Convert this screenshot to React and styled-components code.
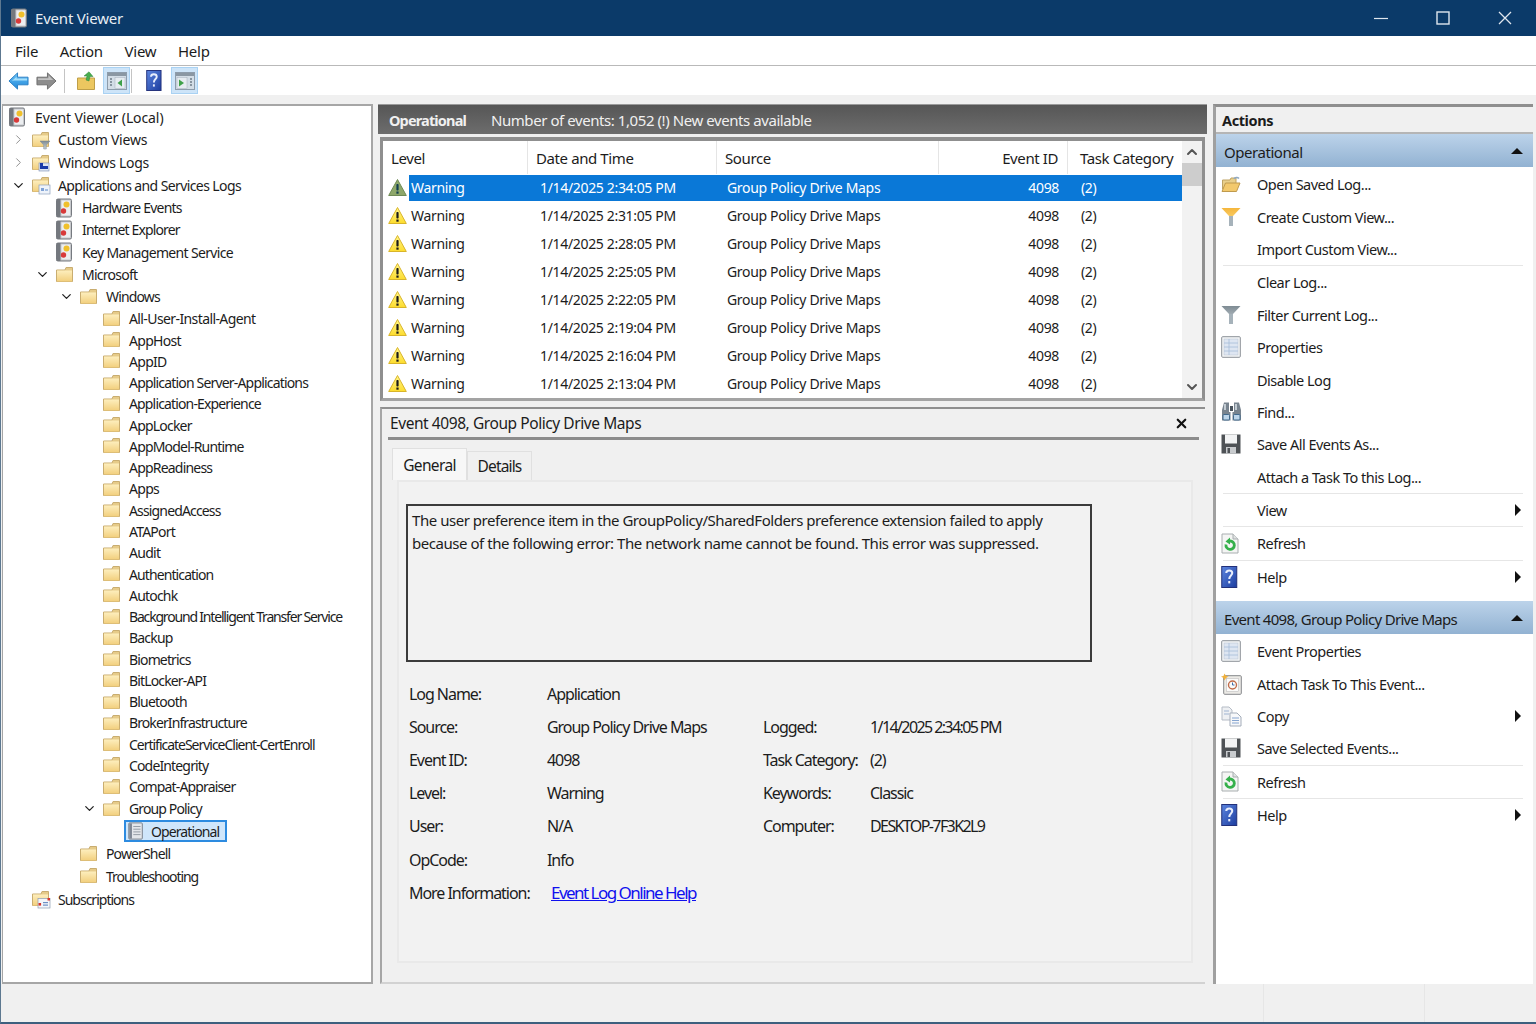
import React from 'react';
import styled, { createGlobalStyle } from 'styled-components';
import { ChevronRight, ChevronDown, ChevronUp, X } from 'lucide-react';

const GlobalStyle = createGlobalStyle`
  html, body { margin: 0; padding: 0; background: #f0f0f0; }
  body { font-family: "Noto Sans", "Open Sans", sans-serif; color: #1c1c1c; }
  * { box-sizing: border-box; }
`;

const Window = styled.div`
  width: 1536px;
  height: 1024px;
  display: flex;
  flex-direction: column;
  overflow: hidden;
  background: #f0f0f0;
  border-left: 1px solid #5d7890;
  border-bottom: 2px solid #3d5f7e;
  font-size: 15px;
`;

const TitleBar = styled.div`
  height: 36px;
  flex: none;
  background: #0b3a69;
  color: #e8eef4;
  display: flex;
  align-items: center;
  padding-left: 9px;
  font-size: 15px;
  letter-spacing: -0.2px;
`;

const TitleText = styled.span`
  flex: 1;
  margin-left: 7px;
`;

const WinButton = styled.div`
  width: 62px;
  height: 36px;
  display: flex;
  align-items: center;
  justify-content: center;
`;

const MenuBar = styled.div`
  height: 30px;
  flex: none;
  background: #fff;
  border-bottom: 1px solid #b9b9b9;
  display: flex;
  align-items: center;
  padding-left: 14px;
  gap: 21.5px;
  font-size: 15px;
  letter-spacing: -0.2px;
`;

const ToolBar = styled.div`
  height: 29px;
  flex: none;
  background: #fff;
  display: flex;
  align-items: center;
  padding-left: 3px;
`;

const ToolButton = styled.div`
  width: ${(p) => p.$w || 28}px;
  height: 27px;
  display: flex;
  align-items: center;
  justify-content: center;
  padding-left: ${(p) => p.$pl || 0}px;
  background: ${(p) => (p.$active ? '#cde4f8' : 'transparent')};
  border: 1px solid ${(p) => (p.$active ? '#a9d2f3' : 'transparent')};
`;

const ToolSep = styled.div`
  width: 1px;
  height: 24px;
  background: #c4c4c4;
  margin: 0 ${(p) => p.$m || 2}px;
`;

const Main = styled.div`
  height: 889px;
  flex: none;
  display: flex;
  gap: 5px;
  padding: 9px 0 0 1px;
`;

const TreePanel = styled.div`
  width: 371px;
  height: 880px;
  flex: none;
  background: #fff;
  border: 2px solid #a6a6a6;
  border-left-width: 1px;
  display: flex;
  flex-direction: column;
`;

const TreeRow = styled.div`
  height: ${(p) => p.$h}px;
  flex: none;
  display: flex;
  align-items: center;
  padding-left: ${(p) => p.$indent}px;
  white-space: nowrap;
  letter-spacing: ${(p) => p.$ls}px;
  font-size: 14px;
`;

const Twist = styled.span`
  width: 15px;
  margin-left: -20px;
  margin-right: 5px;
  display: flex;
  justify-content: center;
  color: ${(p) => (p.$open ? '#222' : '#8a8a8a')};
`;

const TreeIcon = styled.span`
  width: 27px;
  flex: none;
  display: flex;
`;

const TreeSelected = styled.span`
  display: flex;
  align-items: center;
  height: 22px;
  margin-left: -2px;
  padding: 0 6px 0 1px;
  gap: 6px;
  background: #cfe6fb;
  border: 2px solid #2d8be0;
`;

const Center = styled.div`
  width: 830px;
  flex: none;
  display: flex;
  flex-direction: column;
`;

const OperationalBar = styled.div`
  width: 829px;
  height: 30px;
  flex: none;
  background: linear-gradient(180deg, #565656, #6d6d6d);
  border-top: 1px solid #9a9a9a;
  color: #f0f0f0;
  display: flex;
  align-items: center;
  padding-left: 11px;
  gap: 25px;
  font-size: 15px;
  letter-spacing: -0.43px;
`;

const OperationalName = styled.b`
  font-weight: 700;
  font-size: 14.5px;
  letter-spacing: -0.85px;
`;

const TableBox = styled.div`
  width: 825px;
  height: 264px;
  margin: 3px 0 0 2px;
  flex: none;
  background: #fff;
  border: 3px solid #8f8f8f;
  border-top-width: 4px;
  border-bottom: 3px solid #a3a3a3;
  display: flex;
  overflow: hidden;
`;

const TableBody = styled.div`
  flex: 1;
  min-width: 0;
`;

const ColumnGrid = styled.div`
  display: grid;
  grid-template-columns: 145px 189px 222px 129px 1fr;
  height: ${(p) => p.$h}px;
`;

const HeadCell = styled.div`
  border-right: 1px solid #e5e5e5;
  display: flex;
  align-items: center;
  justify-content: ${(p) => (p.$right ? 'flex-end' : 'flex-start')};
  padding: ${(p) => (p.$right ? '0 9px 0 0' : '0 0 0 8px')};
  white-space: nowrap;
  font-size: 15px;
  letter-spacing: -0.4px;
  &:last-child { border-right: 0; padding-left: 12px; }
`;

const EventRow = styled(ColumnGrid)`
  color: ${(p) => (p.$selected ? '#fff' : '#1c1c1c')};
  font-size: 14px;
  letter-spacing: -0.33px;
  align-items: center;
`;

const LevelCell = styled.div`
  display: flex;
  align-items: center;
  padding-left: 5px;
  gap: 2px;
`;

const RowCell = styled.div`
  display: flex;
  align-items: center;
  white-space: nowrap;
  height: 26px;
  background: ${(p) => (p.$selected ? '#0a78d7' : 'transparent')};
  justify-content: ${(p) => (p.$right ? 'flex-end' : 'flex-start')};
  padding: ${(p) => p.$pad};
`;

const Selection = styled.span`
  flex: 1;
  height: 26px;
  display: flex;
  align-items: center;
  padding-left: 2px;
  background: ${(p) => (p.$selected ? '#0a78d7' : 'transparent')};
`;

const ScrollBar = styled.div`
  width: 20px;
  flex: none;
  display: flex;
  flex-direction: column;
  align-items: center;
  background: #f2f2f2;
  color: #555;
`;

const ScrollEnd = styled.div`
  height: 22px;
  flex: none;
  display: flex;
  align-items: center;
  justify-content: center;
`;

const ScrollThumb = styled.div`
  width: 100%;
  height: 23px;
  flex: none;
  background: #cdcdcd;
`;

const ScrollTrack = styled.div`
  flex: 1;
`;

const DetailPanel = styled.div`
  flex: 1;
  min-height: 0;
  margin: 6px 0 0 2px;
  width: 825px;
  border-top: 2px solid #8f8f8f;
  border-left: 2px solid #a6a6a6;
  border-bottom: 2px solid #d2d2d2;
  display: flex;
  flex-direction: column;
  background: #f0f0f0;
`;

const DetailHead = styled.div`
  height: 31px;
  margin: 0 6px 0 6px;
  border-bottom: 3px solid #8c8c8c;
  display: flex;
  align-items: center;
  justify-content: space-between;
  padding: 0 10px 0 2px;
  font-size: 15.5px;
  letter-spacing: -0.43px;
  flex: none;
`;

const Tabs = styled.div`
  display: flex;
  align-items: flex-end;
  height: 32px;
  margin: 8px 0 0 10px;
  flex: none;
`;

const Tab = styled.div`
  height: ${(p) => (p.$active ? 32 : 29)}px;
  width: ${(p) => p.$w}px;
  display: flex;
  align-items: center;
  justify-content: center;
  background: ${(p) => (p.$active ? '#f7f7f7' : '#f0f0f0')};
  border: 1px solid #e0e0e0;
  border-bottom: 0;
  font-size: 15.5px;
  letter-spacing: ${(p) => p.$ls}px;
`;

const TabBody = styled.div`
  width: 796px;
  height: 483px;
  margin-left: 15px;
  background: #f2f2f2;
  border: 2px solid #e9e9e9;
  padding: 22px 0 0 7px;
  flex: none;
`;

const MessageBox = styled.div`
  width: 686px;
  height: 158px;
  border: 2px solid #3b3b3b;
  padding: 3px 4px;
  line-height: 23px;
  font-size: 15px;
  letter-spacing: -0.46px;
`;

const Fields = styled.div`
  margin: 15px 0 0 3px;
  display: grid;
  grid-template-columns: 138px 216px 107px 1fr;
  grid-auto-rows: 33.2px;
  align-items: center;
  font-size: 16px;
  letter-spacing: -1.05px;
  white-space: nowrap;
`;

const TightValue = styled.span`
  letter-spacing: -1.6px;
`;

const InfoLink = styled.a`
  color: #1010ee;
  text-decoration: underline;
  margin-left: 4px;
  font-size: 17px;
  letter-spacing: -1.52px;
`;

const ActionsPanel = styled.div`
  width: 320px;
  height: 880px;
  flex: none;
  border-top: 3px solid #8f8f8f;
  border-left: 3px solid #a0a0a0;
  background: #fff;
  display: flex;
  flex-direction: column;
`;

const ActionsTitle = styled.div`
  height: 27px;
  flex: none;
  display: flex;
  align-items: center;
  padding: 1px 0 0 6px;
  background: #f0f0f0;
  border-bottom: 2px solid #b5b5b5;
  font-weight: 700;
  font-size: 14.5px;
  letter-spacing: -0.4px;
`;

const SectionHead = styled.div`
  height: 33px;
  flex: none;
  margin-top: ${(p) => p.$mt || 0}px;
  background: linear-gradient(180deg, #bcd3ea, #92b2d2);
  display: flex;
  align-items: center;
  justify-content: space-between;
  padding: 3px 10px 0 8px;
  font-size: 15px;
  letter-spacing: ${(p) => p.$ls}px;
`;

const ActionList = styled.div`
  display: flex;
  flex-direction: column;
  flex: none;
  padding-top: 1px;
`;

const ActionRow = styled.div`
  height: 32.4px;
  flex: none;
  display: flex;
  align-items: center;
  padding: 0 10px 0 5px;
  font-size: 14.5px;
  letter-spacing: -0.5px;
`;

const ActionIcon = styled.span`
  width: 36px;
  flex: none;
  display: flex;
`;

const ActionLabel = styled.span`
  flex: 1;
`;

const ActionSep = styled.div`
  height: 1px;
  margin: 0 10px 0 7px;
  background: #e6e6e6;
  flex: none;
`;

const StatusBar = styled.div`
  flex: 1;
  display: grid;
  grid-template-columns: 1262px 161px 1fr;
`;

const StatusCell = styled.div`
  border-left: 1px solid #e6e6e6;
  &:first-child { border-left: 0; }
`;

// little hand drawn icons, the packages don't have the mmc ones
const Defs = styled.svg`
  display: block;
  width: 0;
  height: 0;
  flex: none;
`;

const SharedDefs = () => (
  <Defs>
    <defs>
      <linearGradient id="fold" x1="0" y1="0" x2="0" y2="1">
        <stop offset="0" stopColor="#fdeebd" />
        <stop offset="1" stopColor="#f2cf7d" />
      </linearGradient>
      <linearGradient id="helpg" x1="0" y1="0" x2="1" y2="1">
        <stop offset="0" stopColor="#5d86e0" />
        <stop offset="1" stopColor="#1b3c9e" />
      </linearGradient>
      <linearGradient id="funnel" x1="0" y1="0" x2="0" y2="1">
        <stop offset="0" stopColor="#f5b63c" />
        <stop offset="1" stopColor="#fbe08c" />
      </linearGradient>
      <linearGradient id="grayf" x1="0" y1="0" x2="0" y2="1">
        <stop offset="0" stopColor="#7e8b93" />
        <stop offset="1" stopColor="#cbd3d8" />
      </linearGradient>
      <linearGradient id="warn" x1="0" y1="0" x2="0" y2="1">
        <stop offset="0" stopColor="#fff68a" />
        <stop offset="1" stopColor="#fddc2e" />
      </linearGradient>
      <linearGradient id="back" x1="0" y1="0" x2="0" y2="1">
        <stop offset="0" stopColor="#6cc4f7" />
        <stop offset="1" stopColor="#1f86d8" />
      </linearGradient>
    </defs>
  </Defs>
);

const LogIcon = () => (
  <svg width="18" height="20" viewBox="0 0 18 20">
    <rect x="1.5" y="1" width="15" height="18" rx="1.5" fill="#c7c9cc" stroke="#767a80" />
    <rect x="1.5" y="1" width="4" height="18" fill="#74787e" />
    <rect x="6.5" y="2.5" width="8.5" height="15" fill="#eceef0" />
    <circle cx="11.5" cy="6.5" r="3" fill="#f0c02c" />
    <circle cx="8.5" cy="13" r="2.7" fill="#d83a3a" />
  </svg>
);

const Folder = ({ children }) => (
  <svg width="20" height="20" viewBox="0 0 20 20">
    <path d="M1.5 5 H10 L11 2.5 H17.5 V16.5 H1.5Z" fill="#e6cb89" stroke="#c9ad70" />
    <rect x="2" y="5.5" width="15" height="11" fill="url(#fold)" />
    {children}
  </svg>
);

const FilterFolder = () => (
  <Folder>
    <path d="M9 11 H19 L15.3 15 V19 H12.7 V15Z" fill="url(#grayf)" stroke="#7e8b93" strokeWidth=".5" />
  </Folder>
);

const WindowsFolder = () => (
  <Folder>
    <rect x="8" y="10" width="10" height="8" fill="#dfe6f2" stroke="#7a8db5" strokeWidth=".6" />
    <path d="M9 10 V16 H17 V13 H12 V10Z" fill="#1b3ba8" />
  </Folder>
);

const AppsFolder = () => (
  <Folder>
    <rect x="8" y="10" width="11" height="9" fill="#eef3fa" stroke="#8ca0bd" strokeWidth=".7" />
    <rect x="10" y="13" width="3" height="3" fill="#7fa2d6" />
    <rect x="14" y="14" width="3" height="2" fill="#a5bfe2" />
  </Folder>
);

const SubsFolder = () => (
  <Folder>
    <rect x="7" y="9.5" width="12" height="9.5" fill="#f4f6fa" stroke="#8e9db2" strokeWidth=".7" />
    <rect x="7.5" y="14" width="2.6" height="2.6" fill="#d8352c" />
    <rect x="16.5" y="9" width="2.5" height="2.5" fill="#d8352c" />
    <rect x="12" y="13" width="5" height="1.2" fill="#6d8fc4" />
    <rect x="12" y="15.5" width="5" height="1.2" fill="#6d8fc4" />
  </Folder>
);

const SheetIcon = () => (
  <svg width="18" height="18" viewBox="0 0 18 20">
    <rect x="1" y="1" width="15" height="18" rx="1" fill="#e3e6ea" stroke="#6f7782" />
    <rect x="1.5" y="1.5" width="3" height="17" fill="#7e8794" />
    <path d="M6 5 H14 M6 8 H14 M6 11 H14 M6 14 H14" stroke="#8d95a0" strokeWidth="1" />
  </svg>
);

const Warning = ({ dim }) => (
  <svg width="19" height="19" viewBox="0 0 19 19">
    <path d="M9.5 1.5 L18.3 17.5 H.7Z" fill={dim ? '#8ea76a' : 'url(#warn)'} stroke={dim ? '#6f8a55' : '#d9b52a'} strokeLinejoin="round" />
    <rect x="8.4" y="6" width="2.2" height="6.5" rx=".8" fill={dim ? '#123d4f' : '#1a1a1a'} />
    <rect x="8.4" y="13.5" width="2.2" height="2.2" fill={dim ? '#123d4f' : '#1a1a1a'} />
  </svg>
);

const ArrowBack = () => (
  <svg width="21" height="20" viewBox="0 0 22 20">
    <path d="M1 10 L10 1.5 V6 H21 V14 H10 V18.5Z" fill="url(#back)" stroke="#2a7fc4" strokeLinejoin="round" />
    <path d="M4 10 L9 5.5 V7.5 H20 V9.5 H6Z" fill="#a6e0fb" />
  </svg>
);

const ArrowForward = () => (
  <svg width="21" height="20" viewBox="0 0 22 20">
    <path d="M21 10 L12 1.5 V6 H1 V14 H12 V18.5Z" fill="#8d8d8d" stroke="#6d6d6d" strokeLinejoin="round" />
    <path d="M2 7 H13 V4 L18 9 H2Z" fill="#c2c2c2" />
  </svg>
);

const UpFolder = () => (
  <svg width="20" height="20" viewBox="0 0 20 20">
    <path d="M1.5 7 H18.5 V18.5 H1.5Z" fill="#ecc760" stroke="#bf9f49" />
    <path d="M10 9 L11 5 H8 L13 .8 L17 5.5 H14 L13 10Z" fill="#49ad4e" stroke="#33873a" strokeWidth=".5" />
  </svg>
);

const PaneIcon = ({ right }) => (
  <svg width="20" height="20" viewBox="0 0 20 20">
    <rect x=".5" y="1.5" width="19" height="17" fill="#d3dde6" stroke="#8d9cab" />
    <rect x="1" y="2" width="18" height="3" fill="#8a97a3" />
    {right ? (
      <>
        <rect x="2" y="6.5" width="10" height="11" fill="#e6ecf1" stroke="#a5b0bb" strokeWidth=".5" />
        <path d="M4 8.5 L9 12 L4 15.5Z" fill="#3ea148" />
        <path d="M15 8 H17 M15 11 H17 M15 14 H17" stroke="#6f7c88" strokeWidth="1.5" />
      </>
    ) : (
      <>
        <path d="M3 8 H5 M3 11 H5 M3 14 H5" stroke="#6f7c88" strokeWidth="1.5" />
        <rect x="8" y="6.5" width="10" height="11" fill="#e6ecf1" stroke="#a5b0bb" strokeWidth=".5" />
        <path d="M15 8.5 L10.5 12 L15 15.5Z" fill="#3ea148" />
      </>
    )}
  </svg>
);

const HelpIcon = ({ size = 22 }) => (
  <svg width={size * 0.75} height={size} viewBox="0 0 16 22">
    <rect x=".5" y=".5" width="15" height="21" fill="url(#helpg)" stroke="#22307a" />
    <path d="M5 7 C5 3.5 11 3.5 11 7 C11 9.5 8 9.5 8 13" fill="none" stroke="#e8eefc" strokeWidth="2" />
    <rect x="7" y="15" width="2" height="2.4" fill="#e8eefc" />
  </svg>
);

const OpenIcon = () => (
  <svg width="20" height="20" viewBox="0 0 20 20">
    <path d="M1.5 6 H9 L10 4 H15 V15 H1.5Z" fill="#e9cf8a" stroke="#bfa362" />
    <path d="M1 17.5 L4.5 9 H19 L15.5 17.5Z" fill="#f3c96c" stroke="#bf9a4e" />
    <path d="M13 5 A3 3 0 0 1 18 4.5" fill="none" stroke="#8fa9c4" strokeWidth="1.5" />
  </svg>
);

const FunnelIcon = ({ gray }) => (
  <svg width="20" height="20" viewBox="0 0 20 20">
    <path d="M.5 1 H19.5 L12 9 V19 H8 V9Z" fill={gray ? 'url(#grayf)' : 'url(#funnel)'} />
    <rect x="8" y="9" width="4" height="10" fill="#a6b2ba" />
  </svg>
);

const BinocularIcon = () => (
  <svg width="21" height="21" viewBox="0 0 21 21">
    <path d="M3 1.5 H8 V11 H9.5 V19.5 H1 V9Z" fill="#78848f" />
    <path d="M18 1.5 H13 V11 H11.5 V19.5 H20 V9Z" fill="#78848f" />
    <rect x="9" y="5" width="3" height="5" fill="#4a545e" />
    <rect x="2" y="13.5" width="6.5" height="5.5" rx="1" fill="#bcd5ea" stroke="#426a8d" />
    <rect x="12.5" y="13.5" width="6.5" height="5.5" rx="1" fill="#bcd5ea" stroke="#426a8d" />
    <rect x="3" y="3" width="2" height="6" fill="#c3ccd3" />
    <rect x="14" y="3" width="2" height="6" fill="#c3ccd3" />
  </svg>
);

const SaveIcon = () => (
  <svg width="20" height="20" viewBox="0 0 20 20">
    <path d="M.5 .5 H19.5 V19.5 H.5Z" fill="#4e5256" />
    <rect x="4" y=".5" width="12" height="9" fill="#f2f3f4" />
    <rect x="5" y="13" width="10" height="6.5" fill="#c8cbce" />
    <rect x="6.5" y="14" width="2.5" height="5" fill="#4e5256" />
  </svg>
);

const RefreshIcon = () => (
  <svg width="18" height="21" viewBox="0 0 18 21">
    <path d="M1 1 H12 L17 6 V20 H1Z" fill="#f4f5f4" stroke="#a9aeb0" />
    <path d="M12 1 V6 H17" fill="#dfe2e2" stroke="#a9aeb0" />
    <path d="M5 11.5 A4.2 4.2 0 1 0 9 8" fill="none" stroke="#35b04b" strokeWidth="2.8" />
    <path d="M9 4.5 L4.5 8.5 L9 11.5Z" fill="#35b04b" />
  </svg>
);

const PropsIcon = () => (
  <svg width="20" height="22" viewBox="0 0 20 22">
    <rect x=".7" y=".7" width="18.6" height="20.6" rx="1" fill="#f3f5f7" stroke="#8b9097" />
    <rect x="3" y="3" width="14" height="16" fill="#dee6f2" stroke="#b9c2cd" strokeWidth=".5" />
    <path d="M3 7 H17 M3 11 H17 M3 15 H17 M8 3 V19" stroke="#a6bcd8" strokeWidth=".8" />
  </svg>
);

const TaskIcon = () => (
  <svg width="21" height="22" viewBox="0 0 21 22">
    <rect x="2.7" y="2.7" width="17.6" height="18.6" rx="1" fill="#eceae6" stroke="#86888b" />
    <rect x="5.5" y="5.5" width="12" height="13" fill="#fbfbfa" stroke="#b4b4b4" strokeWidth=".5" />
    <circle cx="11.5" cy="12" r="4" fill="none" stroke="#c06c4a" strokeWidth="1.4" />
    <path d="M11.5 9.5 V12 H13.5" stroke="#3e6ca8" fill="none" />
    <path d="M3.5 .5 L5 3 L7.5 3.5 L5 5 L3.5 7.5 L2.5 5 L0 3.5 L2.5 3Z" fill="#f2b13a" />
  </svg>
);

const CopyIcon = () => (
  <svg width="21" height="21" viewBox="0 0 21 21">
    <path d="M1 1 H8 L11 4 V14 H1Z" fill="#eef0f3" stroke="#b5bcc6" />
    <path d="M3 5 H8 M3 8 H8" stroke="#9fb4d2" />
    <path d="M9 7 H16 L20 11 V20 H9Z" fill="#f7f8fa" stroke="#a4adba" />
    <path d="M11 12 H18 M11 14.5 H18 M11 17 H18" stroke="#86a5d0" />
  </svg>
);

const CaretUp = styled.span`
  width: 0;
  height: 0;
  margin-top: -3px;
  border-left: 6px solid transparent;
  border-right: 6px solid transparent;
  border-bottom: 6px solid #111;
`;

const CaretRight = styled.span`
  width: 0;
  height: 0;
  margin-right: 2px;
  border-top: 6px solid transparent;
  border-bottom: 6px solid transparent;
  border-left: 6px solid #111;
`;

const folderRows = [
  ['All-User-Install-Agent', -0.6], ['AppHost', -0.7], ['AppID', -0.7], ['Application Server-Applications', -0.82],
  ['Application-Experience', -0.85], ['AppLocker', -0.8], ['AppModel-Runtime', -0.81], ['AppReadiness', -0.8],
  ['Apps', -0.7], ['AssignedAccess', -0.85], ['ATAPort', -0.8], ['Audit', -0.7], ['Authentication', -0.9],
  ['Autochk', -0.8], ['Background Intelligent Transfer Service', -1.18], ['Backup', -0.8], ['Biometrics', -0.85],
  ['BitLocker-API', -0.85], ['Bluetooth', -0.8], ['BrokerInfrastructure', -0.9],
  ['CertificateServiceClient-CertEnroll', -1.02], ['CodeIntegrity', -0.85], ['Compat-Appraiser', -0.85],
];

const treeRows = [
  { label: 'Event Viewer (Local)', indent: 5, icon: LogIcon, h: 22, ls: -0.1 },
  { label: 'Custom Views', indent: 28, icon: FilterFolder, twist: 'closed', h: 23, ls: -0.22 },
  { label: 'Windows Logs', indent: 28, icon: WindowsFolder, twist: 'closed', h: 23, ls: -0.3 },
  { label: 'Applications and Services Logs', indent: 28, icon: AppsFolder, twist: 'open', h: 22.5, ls: -0.6 },
  { label: 'Hardware Events', indent: 52, icon: LogIcon, h: 22.3, ls: -0.78 },
  { label: 'Internet Explorer', indent: 52, icon: LogIcon, h: 22.3, ls: -0.87 },
  { label: 'Key Management Service', indent: 52, icon: LogIcon, h: 22.3, ls: -0.67 },
  { label: 'Microsoft', indent: 52, icon: Folder, twist: 'open', h: 22.3, ls: -0.75 },
  { label: 'Windows', indent: 76, icon: Folder, twist: 'open', h: 22.5, ls: -0.85 },
  ...folderRows.map(([label, ls]) => ({ label, indent: 99, icon: Folder, h: 21.27, ls })),
  { label: 'Group Policy', indent: 99, icon: Folder, twist: 'open', h: 22.6, ls: -0.87 },
  { label: 'Operational', indent: 123, icon: SheetIcon, selected: true, h: 22.5, ls: -0.9 },
  { label: 'PowerShell', indent: 76, icon: Folder, h: 22.5, ls: -0.86 },
  { label: 'Troubleshooting', indent: 76, icon: Folder, h: 22.8, ls: -1.06 },
  { label: 'Subscriptions', indent: 28, icon: SubsFolder, h: 23, ls: -1 },
];

const events = [
  '1/14/2025 2:34:05 PM', '1/14/2025 2:31:05 PM', '1/14/2025 2:28:05 PM', '1/14/2025 2:25:05 PM',
  '1/14/2025 2:22:05 PM', '1/14/2025 2:19:04 PM', '1/14/2025 2:16:04 PM', '1/14/2025 2:13:04 PM',
];

const Blank = () => null;

const logActions = [
  { label: 'Open Saved Log...', icon: OpenIcon },
  { label: 'Create Custom View...', icon: FunnelIcon },
  { label: 'Import Custom View...', sep: true },
  { label: 'Clear Log...' },
  { label: 'Filter Current Log...', icon: () => <FunnelIcon gray /> },
  { label: 'Properties', icon: PropsIcon },
  { label: 'Disable Log' },
  { label: 'Find...', icon: BinocularIcon },
  { label: 'Save All Events As...', icon: SaveIcon },
  { label: 'Attach a Task To this Log...', sep: true },
  { label: 'View', sub: true, sep: true },
  { label: 'Refresh', icon: RefreshIcon, sep: true },
  { label: 'Help', icon: HelpIcon, sub: true },
];

const eventActions = [
  { label: 'Event Properties', icon: PropsIcon },
  { label: 'Attach Task To This Event...', icon: TaskIcon },
  { label: 'Copy', icon: CopyIcon, sub: true },
  { label: 'Save Selected Events...', icon: SaveIcon, sep: true },
  { label: 'Refresh', icon: RefreshIcon, sep: true },
  { label: 'Help', icon: HelpIcon, sub: true },
];

const ActionGroup = ({ items }) => (
  <ActionList>
    {items.map((item) => {
      const Icon = item.icon || Blank;
      return (
        <React.Fragment key={item.label}>
          <ActionRow>
            <ActionIcon><Icon /></ActionIcon>
            <ActionLabel>{item.label}</ActionLabel>
            {item.sub && <CaretRight />}
          </ActionRow>
          {item.sep && <ActionSep />}
        </React.Fragment>
      );
    })}
  </ActionList>
);

const App = () => (
  <Window>
    <GlobalStyle />
    <SharedDefs />
    <TitleBar>
      <LogIcon />
      <TitleText>Event Viewer</TitleText>
      <WinButton>
        <svg width="14" height="14" viewBox="0 0 14 14"><path d="M0 7.5 H14" stroke="#dfe6ee" strokeWidth="1.2" /></svg>
      </WinButton>
      <WinButton>
        <svg width="14" height="14" viewBox="0 0 14 14"><rect x="1" y="1" width="12" height="12" fill="none" stroke="#dfe6ee" strokeWidth="1.4" /></svg>
      </WinButton>
      <WinButton>
        <svg width="14" height="14" viewBox="0 0 14 14"><path d="M1 1 L13 13 M13 1 L1 13" stroke="#dfe6ee" strokeWidth="1.3" /></svg>
      </WinButton>
    </TitleBar>
    <MenuBar>
      <span>File</span>
      <span>Action</span>
      <span>View</span>
      <span>Help</span>
    </MenuBar>
    <ToolBar>
      <ToolButton><ArrowBack /></ToolButton>
      <ToolButton><ArrowForward /></ToolButton>
      <ToolSep $m={4} />
      <ToolButton $w={34}><UpFolder /></ToolButton>
      <ToolButton $active $w={27}><PaneIcon /></ToolButton>
      <ToolSep $m={1} />
      <ToolButton $w={38} $pl={4}><HelpIcon size={21} /></ToolButton>
      <ToolButton $active $w={27}><PaneIcon right /></ToolButton>
    </ToolBar>
    <Main>
      <TreePanel>
        {treeRows.map((row) => {
          const Icon = row.icon;
          return (
            <TreeRow key={row.label + row.indent} $h={row.h} $indent={row.indent} $ls={row.ls}>
              {row.twist && (
                <Twist $open={row.twist === 'open'}>
                  {row.twist === 'open' ? <ChevronDown size={15} strokeWidth={2} /> : <ChevronRight size={15} strokeWidth={1.5} />}
                </Twist>
              )}
              {row.selected ? (
                <TreeSelected>
                  <Icon />
                  {row.label}
                </TreeSelected>
              ) : (
                <>
                  <TreeIcon><Icon /></TreeIcon>
                  {row.label}
                </>
              )}
            </TreeRow>
          );
        })}
      </TreePanel>
      <Center>
        <OperationalBar>
          <OperationalName>Operational</OperationalName>
          <span>Number of events: 1,052 (!) New events available</span>
        </OperationalBar>
        <TableBox>
          <TableBody>
            <ColumnGrid $h={33}>
              <HeadCell>Level</HeadCell>
              <HeadCell>Date and Time</HeadCell>
              <HeadCell>Source</HeadCell>
              <HeadCell $right>Event ID</HeadCell>
              <HeadCell>Task Category</HeadCell>
            </ColumnGrid>
            {events.map((time, i) => {
              const selected = i === 0;
              return (
                <EventRow key={time} $h={27.9} $selected={selected}>
                  <LevelCell>
                    <Warning dim={selected} />
                    <Selection $selected={selected}>Warning</Selection>
                  </LevelCell>
                  <RowCell $selected={selected} $pad="0 0 0 12px">{time}</RowCell>
                  <RowCell $selected={selected} $pad="0 0 0 10px">Group Policy Drive Maps</RowCell>
                  <RowCell $selected={selected} $right $pad="0 9px 0 0">4098</RowCell>
                  <RowCell $selected={selected} $pad="0 0 0 13px">(2)</RowCell>
                </EventRow>
              );
            })}
          </TableBody>
          <ScrollBar>
            <ScrollEnd><ChevronUp size={16} strokeWidth={3} /></ScrollEnd>
            <ScrollThumb />
            <ScrollTrack />
            <ScrollEnd><ChevronDown size={16} strokeWidth={3} /></ScrollEnd>
          </ScrollBar>
        </TableBox>
        <DetailPanel>
          <DetailHead>
            <span>Event 4098, Group Policy Drive Maps</span>
            <X size={15} strokeWidth={3.5} color="#111" />
          </DetailHead>
          <Tabs>
            <Tab $active $w={75} $ls={-0.65}>General</Tab>
            <Tab $w={65} $ls={-0.85}>Details</Tab>
          </Tabs>
          <TabBody>
            <MessageBox>
              The user preference item in the GroupPolicy/SharedFolders preference extension failed to apply because of the following error: The network name cannot be found. This error was suppressed.
            </MessageBox>
            <Fields>
              <span>Log Name:</span><span>Application</span><span /><span />
              <span>Source:</span><span>Group Policy Drive Maps</span><span>Logged:</span><TightValue>1/14/2025 2:34:05 PM</TightValue>
              <span>Event ID:</span><span>4098</span><span>Task Category:</span><span>(2)</span>
              <span>Level:</span><span>Warning</span><span>Keywords:</span><span>Classic</span>
              <span>User:</span><span>N/A</span><span>Computer:</span><TightValue>DESKTOP-7F3K2L9</TightValue>
              <span>OpCode:</span><span>Info</span><span /><span />
              <span>More Information:</span><InfoLink href="#">Event Log Online Help</InfoLink>
            </Fields>
          </TabBody>
        </DetailPanel>
      </Center>
      <ActionsPanel>
        <ActionsTitle>Actions</ActionsTitle>
        <SectionHead $ls={-0.45}>
          Operational
          <CaretUp />
        </SectionHead>
        <ActionGroup items={logActions} />
        <SectionHead $mt={8} $ls={-0.7}>
          Event 4098, Group Policy Drive Maps
          <CaretUp />
        </SectionHead>
        <ActionGroup items={eventActions} />
      </ActionsPanel>
    </Main>
    <StatusBar>
      <StatusCell />
      <StatusCell />
      <StatusCell />
    </StatusBar>
  </Window>
);

export default App;
